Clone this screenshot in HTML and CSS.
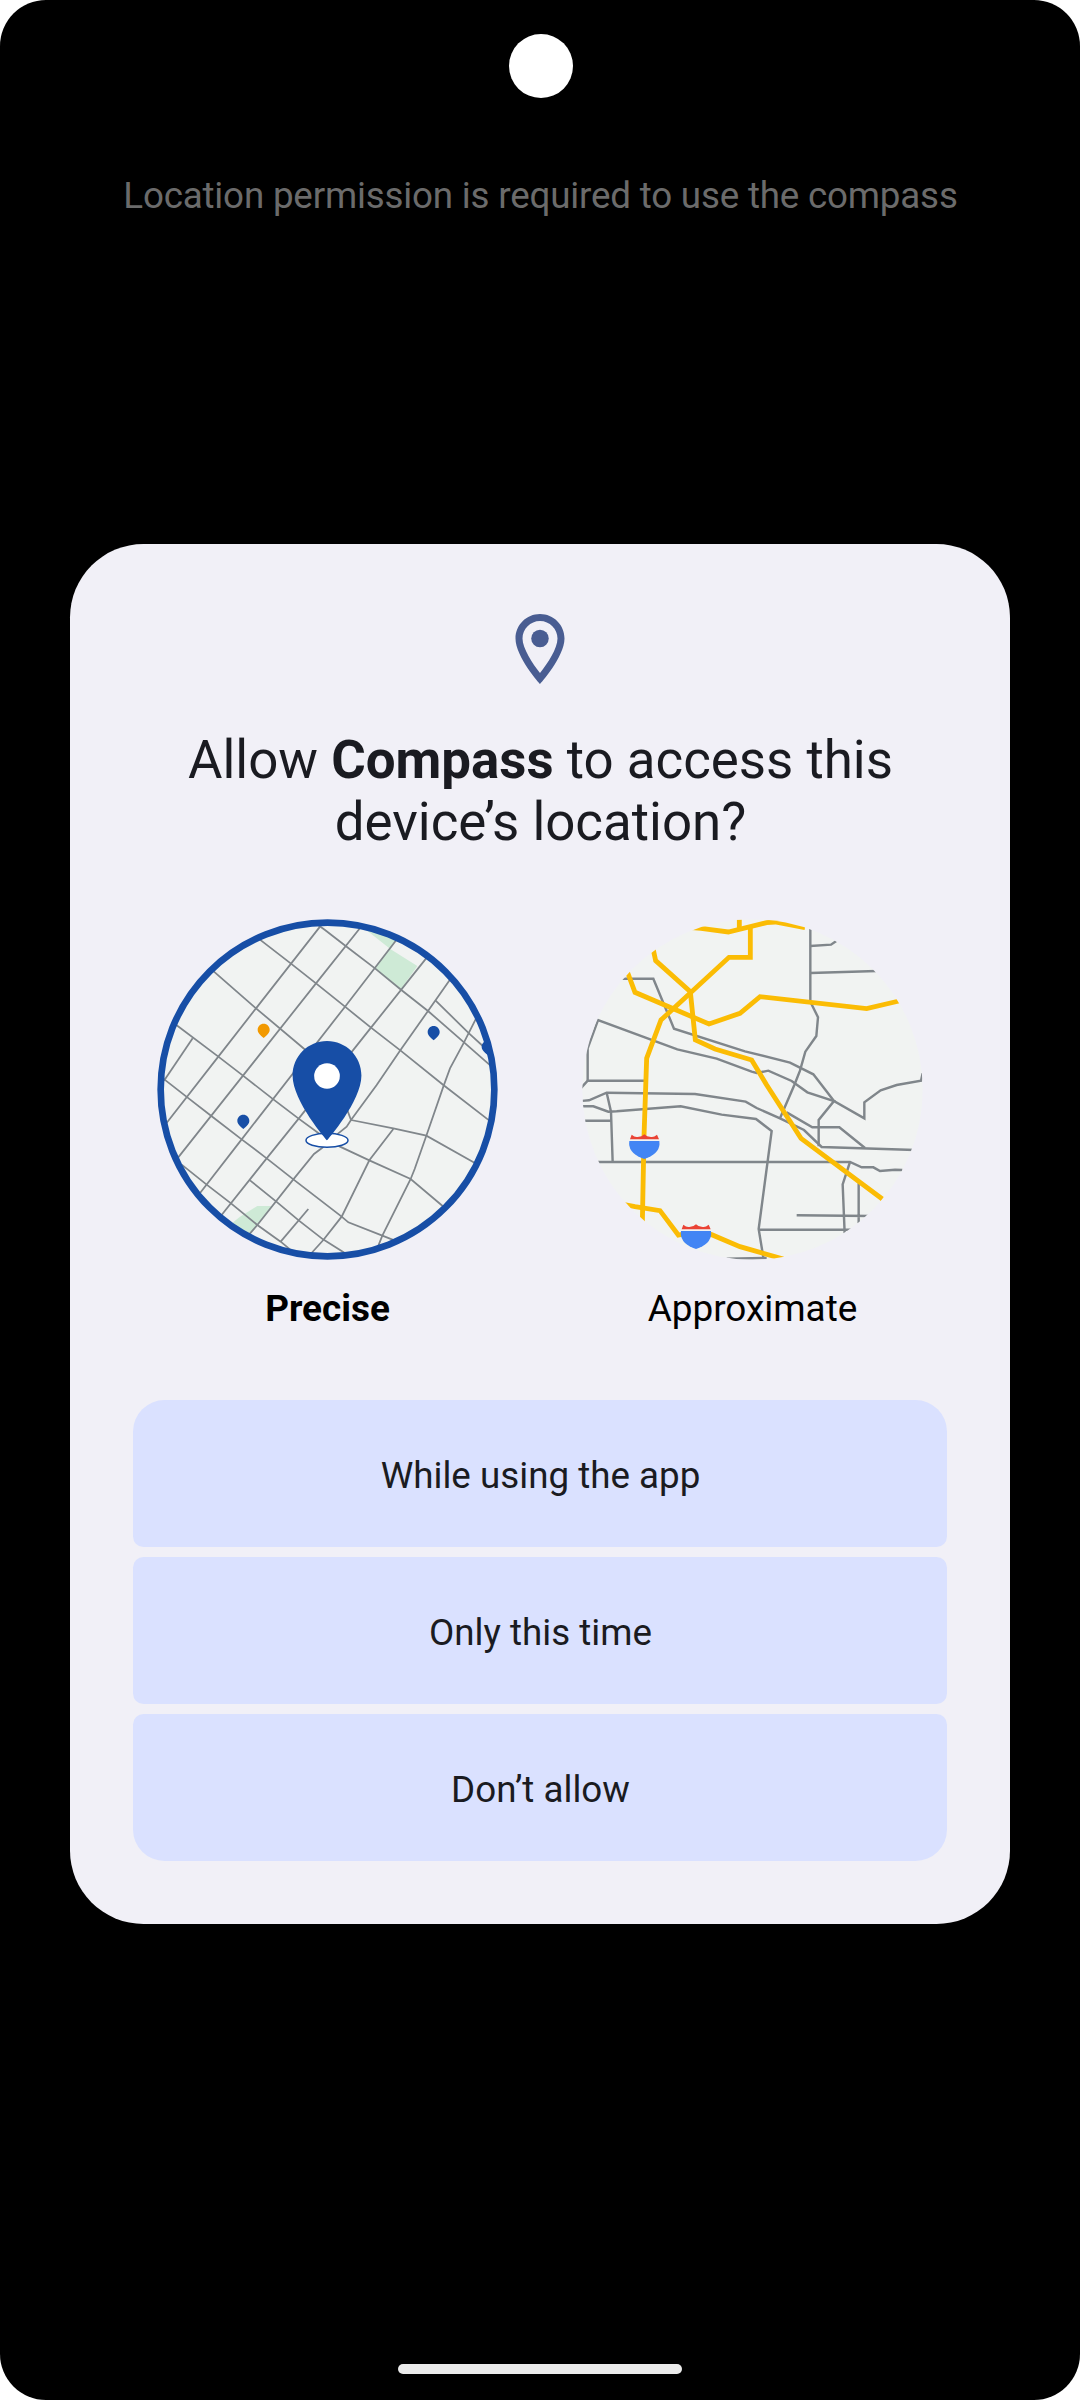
FILE: index.html
```html
<!DOCTYPE html>
<html lang="en">
<head>
<meta charset="utf-8">
<title>Compass</title>
<link rel="stylesheet" href="styles.css">
</head>
<body>
<div class="screen">
  <span class="camera"></span>
  <p class="notice">Location permission is required to use the compass</p>
  <main class="dialog">
    <svg class="dialog-icon" viewBox="0 0 24 24" aria-hidden="true">
      <path d="M12 2C8.13 2 5 5.13 5 9c0 5.25 7 13 7 13s7-7.75 7-13c0-3.87-3.13-7-7-7zM7 9c0-2.76 2.24-5 5-5s5 2.24 5 5c0 2.88-2.88 7.19-5 9.88C9.92 16.21 7 11.85 7 9z"/>
      <circle cx="12" cy="9" r="2.5"/>
    </svg>
    <h1 class="title">Allow <b>Compass</b> to access this<br>device’s location?</h1>
    <div class="accuracy">
      <div class="option selected">
        <svg class="map" viewBox="21 27 1023 1023" aria-hidden="true">
          <defs>
            <clipPath id="precise-clip"><circle cx="532.5" cy="538.5" r="500"/></clipPath>
            <path id="poi" d="M0-18C-10-18-18-10-18 0C-18 10-10 16 0 25C10 16 18 10 18 0C18-10 10-18 0-18Z"/>
          </defs>
          <circle class="land" cx="532.5" cy="538.5" r="505"/>
          <g clip-path="url(#precise-clip)">
            <path class="park" d="M645 57L740 88L722 118L802 168L753 238L675 175L720 116ZM240 944L270 920L322 888H365L300 972L270 990Z"/>
            <g class="streets">
              <path d="M510 50L318 295L205 440L45 645"/>
              <path d="M635 48L498 220L279 497L80 748"/>
              <path d="M742 86L585 290L275 688L145 856"/>
              <path d="M835 137L663 353L446 626L350 745L210 921"/>
              <path d="M905 202L834 303L751 421L680 525L603 630L590 650L565 670L515 715L492 732L430 808L322 945L295 976"/>
              <path d="M128 385L42 512"/>
              <path d="M590 595L603 630"/>
              <path d="M75 342L205 440L279 497L370 568L446 626L510 673L570 710L658 751L782 807L885 894"/>
              <path d="M185 179L318 295L463 417L525 468"/>
              <path d="M325 85L422 160L498 220L585 290L663 353L751 421L880 525L1022 635"/>
              <path d="M500 42L525 60L587 108L675 175L754 240L834 303L942 397L1025 470"/>
              <path d="M857 272L957 370L1005 414"/>
              <path d="M978 326L942 397L900 475L880 530L829 677L794 777L782 807L697 977L683 1012"/>
              <path d="M603 630L730 655L829 677L980 762"/>
              <path d="M730 657L658 751L575 920L520 990L482 1032"/>
              <path d="M40 506L112 562L184 618L275 688L350 745L430 808L575 920L595 937L697 977L735 992"/>
              <path d="M95 764L170 824L243 880L322 945L392 995L420 1018"/>
              <path d="M300 811L379 875L446 931L519 988L588 1031"/>
              <path d="M475 897L392 995"/>
            </g>
            <use href="#poi" x="341" y="359" fill="#f29900"/>
            <use href="#poi" x="851" y="366" fill="#174ea6"/>
            <use href="#poi" x="280" y="632" fill="#174ea6"/>
            <use href="#poi" x="1013" y="410" fill="#174ea6"/>
          </g>
          <ellipse cx="531" cy="691" rx="63" ry="21" fill="#fff" stroke="#174ea6" stroke-width="4.5"/>
          <path transform="translate(354 363.5) scale(14.75)" d="M12 2C8.13 2 5 5.13 5 9c0 5.25 7 13.2 7 13.2s7-7.950 7-13.2c0-3.87-3.13-7-7-7z" fill="#174ea6"/>
          <circle cx="531" cy="498" r="38.500" fill="#fff"/>
          <circle cx="532.5" cy="538.5" r="500.500" fill="none" stroke="#174ea6" stroke-width="20"/>
        </svg>
        <span class="option-label">Precise</span>
      </div>
      <div class="option">
        <svg class="map" viewBox="21 27 1023 1023" aria-hidden="true">
          <defs>
            <clipPath id="approx-clip"><circle cx="532.5" cy="538.5" r="510.500"/></clipPath>
            <g id="shield">
              <path d="M-44-31H44V-24H-44Z" fill="#f1f3f2"/>
              <path d="M-43-30L-38-44Q-28-35-20-37Q-7-37 0-45Q7-37 20-37Q28-35 38-44L44-30Z" fill="#ea4335"/>
              <path d="M-45-25H45Q50 8 10 25L0 29L-10 25Q-50 8-45-25Z" fill="#4285f4"/>
            </g>
          </defs>
          <circle class="land" cx="532.5" cy="538.5" r="510.500"/>
          <g clip-path="url(#approx-clip)">
            <g class="roads">
              <path d="M135 206H235L297 356L510 424L645 458L715 493L740 525L777 573L868 625V577L917 541L965 525L1038 512L1043 490"/>
              <path d="M18 534L38 512H210"/>
              <path d="M38 512V415L69 330L307 418L425 446L530 485L545 489L580 482L650 513L697 547L777 573L731 630V709"/>
              <path d="M706 57V275L729 322L724 378L691 425L675 482L658 525L615 625"/>
              <path d="M706 108L768 104L784 93M706 189L905 183"/>
              <path d="M15 573L42 571L95 548L360 552L512 575L545 594L615 625L687 660L740 711L1020 720"/>
              <path d="M15 589H55L100 605L125 604L317 589L440 614L543 627L590 663L551 957L565 1042"/>
              <path d="M20 632H108M95 548L108 605L113 756"/>
              <path d="M60 756H825L860 772H895L915 783L960 779L982 780"/>
              <path d="M635 607L712 652H793L870 714"/>
              <path d="M825 756L803 823L809 970M851 820V940M665 916L885 918M551 959H830M455 1046L575 1044"/>
            </g>
            <g class="highways">
              <path d="M340 52L378 55L460 66L575 38L600 36L690 53"/>
              <path d="M493 28V55"/>
              <path d="M526 50V142H462L258 330L215 445L207 680L202 940"/>
              <path d="M233 110L242 152L346 245L361 390L420 417L530 450L575 525L678 685L922 867"/>
              <path d="M155 180L180 247L402 342L495 310L555 260L875 296L972 273"/>
              <path d="M140 882L180 890L255 902L310 975L363 965L410 974L495 1010L625 1047"/>
            </g>
          </g>
          <use href="#shield" x="208" y="718"/>
          <use href="#shield" x="363" y="988"/>
        </svg>
        <span class="option-label">Approximate</span>
      </div>
    </div>
    <div class="actions">
      <button class="action">While using the app</button>
      <button class="action">Only this time</button>
      <button class="action">Don’t allow</button>
    </div>
  </main>
  <span class="nav-handle"></span>
</div>
</body>
</html>
```
FILE: styles.css
```css
* { box-sizing: border-box; }

body {
  margin: 0;
  background: #fff;
  font-family: Roboto, sans-serif;
}

.screen {
  width: 1080px;
  height: 2400px;
  padding: 34px 0 26px;
  border-radius: 46px;
  background: #000;
  display: flex;
  flex-direction: column;
  align-items: center;
}

.camera {
  width: 64px;
  height: 64px;
  margin-left: 2px;
  border-radius: 50%;
  background: #fff;
}

.notice {
  margin: 76px 0 0;
  padding-left: 1px;
  color: #6b6b6b;
  font-size: 36.75px;
  line-height: 44px;
  letter-spacing: -0.19px;
  white-space: nowrap;
}

.dialog {
  width: 940px;
  height: 1380px;
  margin-top: 326px;
  padding: 63px 63px 0;
  border-radius: 73.5px;
  background: #f1f0f7;
  display: flex;
  flex-direction: column;
  align-items: center;
}

.dialog-icon {
  width: 84px;
  height: 84px;
  fill: #495d92;
}

.title {
  margin: 38px 0 0;
  padding-left: 1px;
  color: #1a1b21;
  font-size: 52.85px;
  font-weight: 400;
  line-height: 62px;
  text-align: center;
  white-space: nowrap;
}

.title b { font-weight: 700; }

.accuracy {
  margin-top: 66px;
  display: flex;
  gap: 84px;
}

.option {
  display: flex;
  flex-direction: column;
  align-items: center;
  gap: 27px;
}

.map {
  display: block;
  width: 341px;
  height: 341px;
}

.land { fill: #f1f3f2; }
.park { fill: #ceead6; }
.streets, .roads, .highways { fill: none; }
.streets { stroke: #80868b; stroke-width: 5.3; }
.roads { stroke: #80868b; stroke-width: 7.3; }
.highways { stroke: #fbbc04; stroke-width: 14.5; }

.option-label {
  color: #000;
  font-size: 36.9px;
  line-height: 44px;
}

.selected .option-label { font-weight: 700; }

.actions {
  align-self: stretch;
  margin-top: 69px;
  display: flex;
  flex-direction: column;
  gap: 10px;
}

.action {
  height: 147px;
  border: 0;
  padding: 4px 0 0 1px;
  border-radius: 10.5px;
  background: #dae1ff;
  color: #1a1b21;
  font: 400 36.75px/44px Roboto, sans-serif;
}

.action:first-child { border-radius: 31.5px 31.5px 10.5px 10.5px; }
.action:last-child { border-radius: 10.5px 10.5px 31.5px 31.5px; }

.nav-handle {
  width: 284px;
  height: 10px;
  margin-top: auto;
  border-radius: 5px;
  background: #ebebeb;
}
```
